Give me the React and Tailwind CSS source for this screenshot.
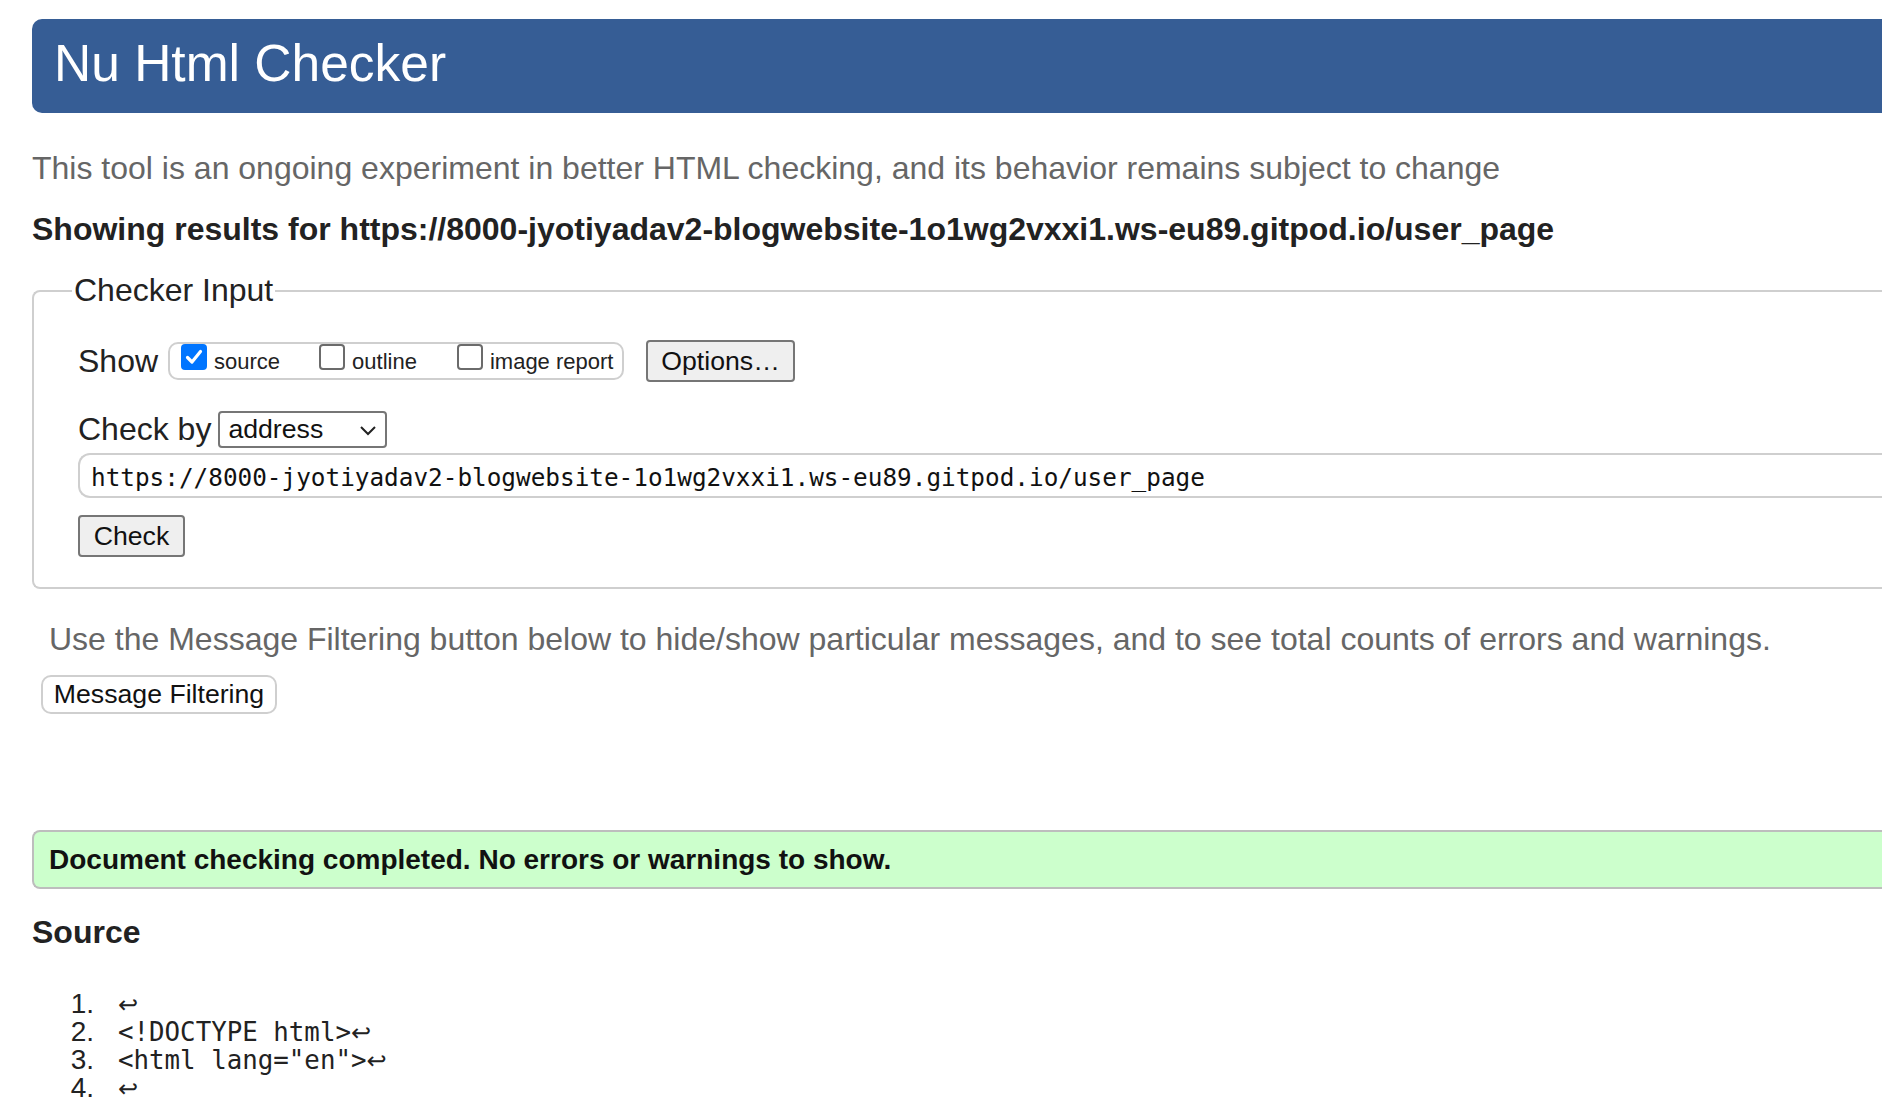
import React from 'react';

const url = 'https://8000-jyotiyadav2-blogwebsite-1o1wg2vxxi1.ws-eu89.gitpod.io/user_page';

function Box({ checked }) {
  if (checked) {
    return (
      <span className="self-start w-[26px] h-[26px] rounded-[4px] bg-[#0075ff] flex items-center justify-center shrink-0">
        <svg width="20" height="20" viewBox="0 0 20 20">
          <path d="M3.5 10.5 L8 15 L16.5 4.5" fill="none" stroke="white" strokeWidth="3.2" strokeLinecap="round" strokeLinejoin="round" />
        </svg>
      </span>
    );
  }
  return <span className="self-start w-[26px] h-[26px] rounded-[4px] border-2 border-[#6b6b6b] bg-white shrink-0" />;
}

function Option({ checked, label, className }) {
  return (
    <label className={`flex items-center h-full ${className || ''}`}>
      <Box checked={checked} />
      <span className="ml-[7px] text-[22px] leading-[25px] text-[#222]">{label}</span>
    </label>
  );
}

const lines = ['', '<!DOCTYPE html>', '<html lang="en">', ''];

export default function App() {
  return (
    <div className="w-full h-[1104px] overflow-hidden bg-white pt-[19px] pl-[32px] font-['Liberation_Sans',Arial,sans-serif]">
      <header className="h-[94px] bg-[#365d95] rounded-l-[10px] flex items-center pl-[22px] pb-[4px]">
        <h1 className="text-[51.5px] leading-none text-white">Nu Html Checker</h1>
      </header>

      <p className="mt-[37px] text-[32px] leading-[37px] text-[#666]">
        This tool is an ongoing experiment in better HTML checking, and its behavior remains subject to change
      </p>
      <h2 className="mt-[24px] text-[32px] leading-[37px] font-bold text-[#222] whitespace-nowrap">
        Showing results for {url}
      </h2>

      <fieldset className="mt-[24px] border-2 border-r-0 border-[#cfcfcf] rounded-l-[8px] pl-[44px] pt-[31px] pb-[30px]">
        <legend className="ml-[-6px] px-[2px] text-[32px] leading-[37px] text-[#222]">Checker Input</legend>

        {/* show options */}
        <div className="flex items-center h-[42px]">
          <span className="text-[32px] leading-[37px] text-[#222]">Show</span>
          <div className="ml-[10px] w-[456px] h-[38px] border-2 border-[#cfcfcf] rounded-[10px] flex pl-[11px]">
            <Option checked label="source" />
            <Option label="outline" className="ml-[39px]" />
            <Option label="image report" className="ml-[40px]" />
          </div>
          <button className="ml-[22px] w-[149px] h-[42px] bg-[#efefef] border-2 border-[#767676] rounded-[4px] text-[26.67px] text-[#111] leading-none">
            Options…
          </button>
        </div>

        {/* check by */}
        <div className="mt-[29px] flex items-center h-[37px]">
          <span className="text-[32px] leading-[37px] text-[#222]">Check by</span>
          <div className="ml-[7px] w-[169px] h-[37px] border-2 border-[#767676] rounded-[4px] bg-white flex items-center pl-[8px] pr-[8px]">
            <span className="flex-1 text-[26.67px] leading-none text-[#111]">address</span>
            <svg width="18" height="12" viewBox="0 0 18 12">
              <polyline points="2,3 9,10 16,3" fill="none" stroke="#222" strokeWidth="2" />
            </svg>
          </div>
        </div>

        <div className="mt-[5px] h-[45px] border-2 border-r-0 border-[#cfcfcf] rounded-l-[12px] flex items-center pl-[11px] pt-[5px] overflow-hidden">
          <span className="font-['DejaVu_Sans_Mono',monospace] text-[24.35px] text-[#111] whitespace-nowrap">{url}</span>
        </div>

        <button className="mt-[17px] block w-[107px] h-[42px] bg-[#efefef] border-2 border-[#767676] rounded-[4px] text-[26.67px] text-[#111] leading-none">
          Check
        </button>
      </fieldset>

      <p className="mt-[32px] pl-[17px] text-[32px] leading-[37px] text-[#666] whitespace-nowrap">
        Use the Message Filtering button below to hide/show particular messages, and to see total counts of errors and warnings.
      </p>
      <button className="ml-[9px] mt-[17px] block w-[236px] h-[39px] bg-white border-2 border-[#cfcfcf] rounded-[10px] text-[26.67px] text-[#111] leading-none">
        Message Filtering
      </button>

      <div className="mt-[116px] h-[59px] bg-[#ccffcc] border-2 border-r-0 border-[#bdbdbd] rounded-l-[8px] flex items-center pl-[15px]">
        <span className="text-[28px] font-bold text-[#111]">Document checking completed. No errors or warnings to show.</span>
      </div>

      <h2 className="mt-[25px] text-[32px] leading-[37px] font-bold text-[#222]">Source</h2>

      <ol className="mt-[39px]">
        {lines.map((l, i) => (
          <li key={i} className="flex h-[28px] items-center">
            <span className="w-[62px] text-right text-[28px] text-[#222]">{i + 1}.</span>
            <code className="ml-[24px] font-['DejaVu_Sans_Mono',monospace] text-[25.8px] text-[#222] whitespace-pre">
              {l}
              <span className="font-['DejaVu_Sans',sans-serif] text-[24px]">↩</span>
            </code>
          </li>
        ))}
      </ol>
    </div>
  );
}
